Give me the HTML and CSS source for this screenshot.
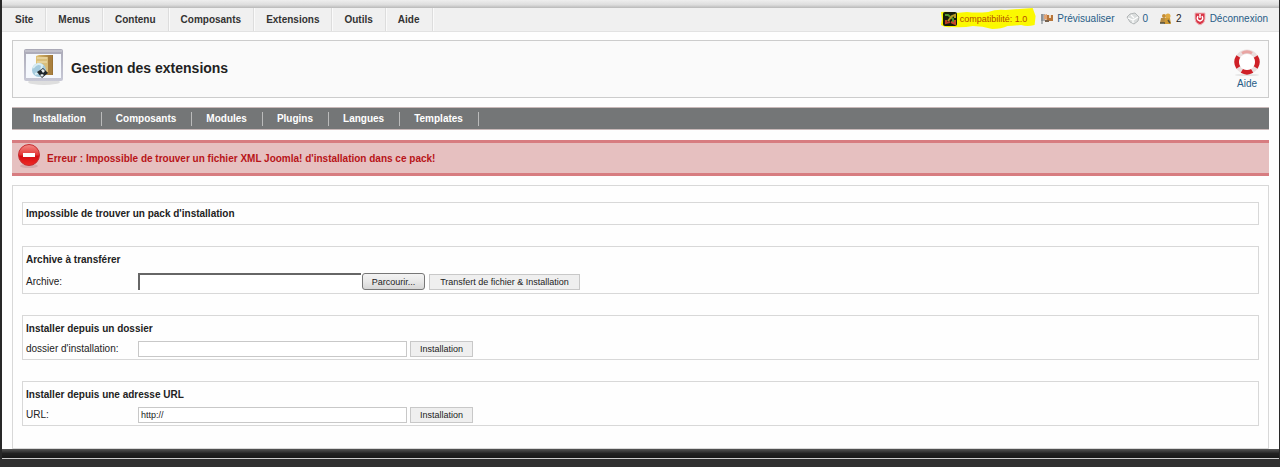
FILE: index.html
```html
<!DOCTYPE html>
<html lang="fr">
<head>
<meta charset="utf-8">
<title>Gestion des extensions</title>
<link rel="stylesheet" href="styles.css">
</head>
<body>
<div class="page">
  <div class="top-edge"></div>
  <header class="menubar">
    <nav class="menu">
      <a href="#">Site</a><a href="#">Menus</a><a href="#">Contenu</a><a href="#">Composants</a><a href="#">Extensions</a><a href="#">Outils</a><a href="#">Aide</a>
    </nav>
    <div class="status">
      <span class="status-item compat">
        <svg class="marker" viewBox="0 0 100 22" preserveAspectRatio="none"><path d="M1 4 Q8 3 16 5 L28 4 Q38 5 50 4 Q58 1 68 2 L96 0 L99 8 L98 17 Q90 19 84 17 Q76 18 70 18 Q64 21 54 21 Q44 18 34 18 Q24 20 12 19 Q6 20 1 17 L2 11Z" fill="#fbf900"/></svg>
        <svg class="icon" viewBox="0 0 14 14"><rect width="14" height="14" rx="2" fill="#171c0b"/><path d="M2 3h3l5 4v4" fill="none" stroke="#52952b" stroke-width="2"/><path d="M5 9l4-5 3-1v3" fill="none" stroke="#b99a24" stroke-width="2"/><path d="M3 8v3l4-1" fill="none" stroke="#b93d20" stroke-width="2"/><path d="M8 10l4 2V8" fill="none" stroke="#c54928" stroke-width="2"/></svg>
        <span class="label">compatibilité: 1.0</span>
      </span>
      <a class="status-item preview" href="#">
        <svg class="icon" viewBox="0 0 14 14"><path d="M1 2h4v7H1z" fill="#a9adb1"/><path d="M2 2v10" stroke="#6f777c"/><path d="M4 3l3-1v6L4 7z" fill="#e1a374"/><path d="M7 3h6v6H7z" fill="#b87539"/><path d="M9 3h2v3H9z" fill="#f0ddc4"/><path d="M5 8h4v2H5z" fill="#77624f"/></svg>
        <span>Prévisualiser</span>
      </a>
      <a class="status-item mail" href="#">
        <svg class="icon" viewBox="0 0 14 14"><path d="M1 5l3-3 5-1 4 4-1 4-4 3-4-2z" fill="#dadddd" stroke="#b3b7b8"/><path d="M2 6l5 2 5-3M5 3l3 3M7 8v3" fill="none" stroke="#fff" stroke-width="1.2"/></svg>
        <span>0</span>
      </a>
      <span class="status-item users">
        <svg class="icon" viewBox="0 0 14 14"><circle cx="5" cy="4" r="2" fill="#c58d35"/><circle cx="9" cy="4" r="2.5" fill="#e1ab42"/><path d="M2 6h5v5H1z" fill="#b58a42"/><path d="M6 6h5l1 6H5z" fill="#d19b35"/><path d="M9 8l2 3M1 11h5" stroke="#53503e" stroke-width="1.5"/></svg>
        <span>2</span>
      </span>
      <a class="status-item logout" href="#">
        <svg class="icon" viewBox="0 0 14 14"><path d="M2 1h10v6q0 4-5 6-5-2-5-6z" fill="#d93445" stroke="#edbdc1"/><path d="M5 4q-2 4 2 5 4-1 2-5M7 2v4" fill="none" stroke="#fff" stroke-width="1.5"/></svg>
        <span>Déconnexion</span>
      </a>
    </div>
  </header>

  <main class="main">
    <div class="title-box">
      <svg class="title-icon" viewBox="0 0 42 40">
        <defs><linearGradient id="win" x2="0" y2="1"><stop stop-color="#aaa9b7"/><stop offset="1" stop-color="#c8c9d6"/></linearGradient><linearGradient id="door"><stop stop-color="#e2c375"/><stop offset="1" stop-color="#987033"/></linearGradient></defs>
        <ellipse cx="21" cy="34" rx="16" ry="3" fill="#dedede"/>
        <rect x="1" y="1" width="39" height="32" rx="2" fill="url(#win)"/><path d="M2 3h37" stroke="#d4d4dc"/>
        <path d="M3 6h35v24H3z" fill="#f5f8fd"/>
        <path d="M13 8l3-1h14v20H16l-3-3z" fill="url(#door)"/><path d="M14 9h11v15H14z" fill="#d9be7b"/><path d="M14 10h10M14 14h10" stroke="#f3e5bb"/><path d="M25 8l4-1v20l-4-2z" fill="#a98040"/>
        <circle cx="16" cy="22" r="7" fill="#a4cadd"/><path d="M10 20q5-7 10-2M12 26q7-1 7-9" fill="none" stroke="#d9edf3" stroke-width="2"/>
        <path d="M14 24l6-4 5 5-6 5z" fill="#20272b"/><path d="M18 22l2-1 2 2-2 2zM17 27l2-1 2 1-2 2z" fill="#e9eff0"/>
      </svg>
      <h1>Gestion des extensions</h1>
      <a class="help" href="#">
        <svg viewBox="0 0 28 28"><ellipse cx="14" cy="26" rx="12" ry="1" fill="#e2e2e2"/><circle cx="14" cy="13" r="10" fill="none" stroke="#e9dede" stroke-width="5"/><g fill="none" stroke="#cf2027" stroke-width="5"><path d="M5.500 7.600A10 10 0 0 0 5.500 18.400"/><path d="M22.500 7.600A10 10 0 0 1 22.500 18.400"/><path d="M9 21.700A10 10 0 0 0 19 21.700"/></g><path d="M9 4.300A10 10 0 0 1 19 4.300" fill="none" stroke="#e9a5a3" stroke-width="3"/><circle cx="14" cy="13" r="8" fill="#fff"/></svg>
        <span>Aide</span>
      </a>
    </div>

    <nav class="submenu">
      <a href="#">Installation</a><a href="#">Composants</a><a href="#">Modules</a><a href="#">Plugins</a><a href="#">Langues</a><a href="#">Templates</a>
    </nav>

    <div class="error" role="alert">
      <svg viewBox="0 0 24 26"><defs><linearGradient id="stop" x2="0" y2="1"><stop stop-color="#f38c87"/><stop offset=".5" stop-color="#e23535"/><stop offset=".55" stop-color="#d40c12"/><stop offset="1" stop-color="#f02a25"/></linearGradient></defs><ellipse cx="12" cy="23" rx="9" ry="2" fill="#d3a9ab"/><circle cx="12" cy="12" r="10.500" fill="url(#stop)" stroke="#c72c30"/><rect x="6" y="10" width="12" height="4" fill="#fff"/></svg>
      <strong>Erreur : Impossible de trouver un fichier XML Joomla! d'installation dans ce pack!</strong>
    </div>

    <div class="content">
      <section class="panel notice"><h2>Impossible de trouver un pack d'installation</h2></section>

      <form class="panel upload">
        <h2>Archive à transférer</h2>
        <div class="row">
          <label for="archive">Archive:</label>
          <div class="file">
            <input class="file-path" id="archive" type="text">
            <button class="browse" type="button">Parcourir...</button>
          </div>
          <button class="wide" type="button">Transfert de fichier &amp; Installation</button>
        </div>
      </form>

      <form class="panel">
        <h2>Installer depuis un dossier</h2>
        <div class="row">
          <label for="folder">dossier d'installation:</label>
          <input id="folder" type="text">
          <button type="button">Installation</button>
        </div>
      </form>

      <form class="panel">
        <h2>Installer depuis une adresse URL</h2>
        <div class="row">
          <label for="url">URL:</label>
          <input id="url" type="text" value="http://">
          <button type="button">Installation</button>
        </div>
      </form>
    </div>
  </main>
  <div class="bottom-edge"></div>
</div>
</body>
</html>
```
FILE: styles.css
```css
* { box-sizing: border-box; }
body {
  margin: 0;
  padding-bottom: 8px;
  background: #303030;
  color: #222;
  font: 10px/14px "Liberation Sans", Arial, sans-serif;
}
a { color: #265c87; text-decoration: none; }
h1, h2 { margin: 0; }
svg { display: block; flex: none; }

.page {
  background: #fefefe;
  border: solid #282828;
  border-width: 0 1px 0 2px;
}
.top-edge {
  height: 8px;
  background: linear-gradient(#eee, #ddd 60%, #b8b8b8);
}
.menubar {
  display: flex;
  justify-content: space-between;
  height: 24px;
  background: #f0f0f0;
  border-bottom: 1px solid #e2e2e2;
}
.menu { display: flex; }
.menu a {
  padding: 5px 12px 4px;
  border-right: 1px solid #ddd;
  box-shadow: 1px 0 #fafafa;
  color: #333;
  font-weight: bold;
}
.menu a:first-child { padding-left: 13px; }

.status { display: flex; align-items: center; gap: 11px; padding: 0 11px 2px 0; }
.status-item { display: flex; align-items: center; gap: 3px; position: relative; }
.status .icon { width: 14px; height: 14px; }
.compat { color: #b34900; padding-right: 2px; font-size: 9px; }
.compat .label, .compat .icon { position: relative; }
.marker { position: absolute; left: -3px; top: -4px; width: calc(100% + 10px); height: 22px; }
.users { color: #222; }

.main { padding: 8px 10px 0; }
.title-box {
  display: flex;
  align-items: center;
  height: 58px;
  padding: 0 7px 2px 10px;
  border: 1px solid #ccc;
  background: #fafafa;
}
.title-icon { width: 42px; height: 40px; }
.title-box h1 { margin-left: 6px; font-size: 14px; line-height: 20px; }
.help {
  display: flex;
  flex-direction: column;
  align-items: center;
  padding-top: 4px;
  margin-left: auto;
}
.help svg { width: 28px; height: 28px; }

.submenu {
  display: flex;
  align-items: center;
  height: 23px;
  margin-top: 9px;
  padding-left: 1px;
  background: #747677;
  border: solid #c9b9b9;
  border-width: 1px 0;
}
.submenu a {
  padding: 0 15px 0 14px;
  border-right: 1px solid #bbb;
  color: #fff;
  font-weight: bold;
}
.submenu a:first-child { padding-left: 20px; }

.error {
  display: flex;
  align-items: center;
  gap: 6px;
  height: 36px;
  margin-top: 10px;
  padding: 0 5px 4px;
  background: #e6c0c0;
  border: solid #d77c80;
  border-width: 3px 0;
  color: #b81418;
}
.error svg { width: 24px; height: 26px; }
.error strong { padding-top: 6px; }

.content {
  display: grid;
  gap: 21px;
  margin-top: 9px;
  padding: 16px 9px 22px;
  border: 1px solid #d8d8d8;
}
.panel { padding: 5px 3px 0 3px; border: 1px solid #d8d8d8; }
.panel h2 { font-size: 10px; line-height: 16px; }
.panel.notice { padding: 3px 3px 2px; }
.row { display: flex; align-items: center; gap: 3px; height: 20px; margin-top: 2px; }
.upload .row { height: 23px; }
.row label { width: 109px; }
input, button { margin: 0; color: #222; font: inherit; font-size: 9px; border: 1px solid #c8c8c8; }
input { width: 269px; height: 16px; padding: 0 2px; background: #fff; }
button { width: 63px; height: 16px; padding: 0; background: #efefef; line-height: 14px; }
.file { display: flex; gap: 1px; margin-right: 1px; }
.file-path {
  width: 223px;
  height: 17px;
  border: solid #666;
  border-width: 2px 0 0 2px;
}
.browse {
  height: 17px;
  border-color: #777;
  border-radius: 3px;
  background: linear-gradient(#f3f3f3, #e8e8e8 50%, #d6d6d6);
}
.wide { width: 151px; }

.bottom-edge {
  height: 10px;
  background: linear-gradient(#555, #222 50%, #191919);
  border-bottom: 1px solid #ccc;
}
```
